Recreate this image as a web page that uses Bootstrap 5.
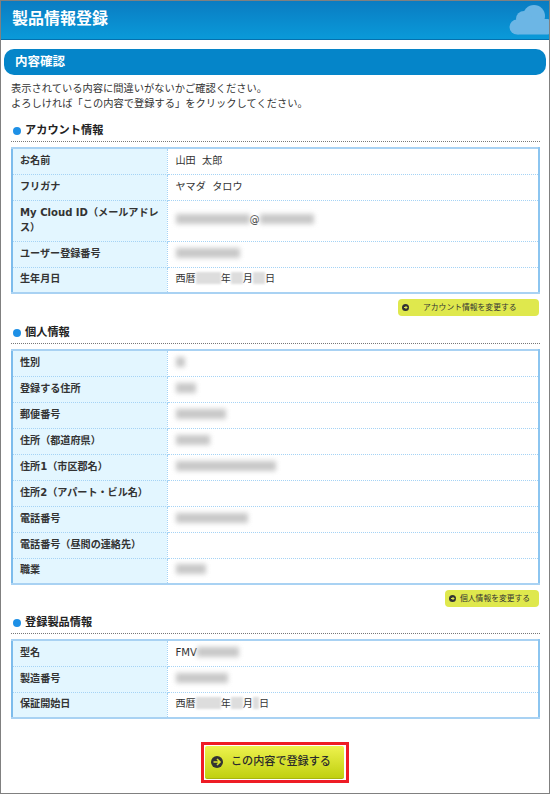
<!DOCTYPE html>
<html lang="ja"><head><meta charset="utf-8">
<link href="https://cdn.jsdelivr.net/npm/bootstrap@5.3.0/dist/css/bootstrap.min.css" rel="stylesheet">
<style>
html,body{height:100%;margin:0;overflow:hidden}
body{font-family:"DejaVu Sans","Noto Sans CJK JP",sans-serif;font-size:10.25px;color:#333;background:#fff}
.frame{height:794px;border:1px solid #808080;position:relative;overflow:hidden}
.topbar{height:39px;background:linear-gradient(#0a7cc2,#0a9ad9);border-bottom:1px solid #0670ad;padding-left:11px;position:relative}
.topbar h1{font-size:16px;font-weight:700;color:#fff;margin:0;line-height:36px}
.cloud{position:absolute;right:0;top:4px}
.sect-bar{margin:9px 3px 0;height:26px;background:#0585c9;border-radius:10px;color:#fff;font-size:12.5px;font-weight:700;line-height:25px;padding-left:11px}
.lead-text{margin:6px 0 0 10px;line-height:15px;font-size:10.25px;color:#333}
.sub-h{margin:10px 9px 0 10px;height:21px;border-bottom:1px dotted #777;font-size:11.2px;font-weight:700;color:#222;line-height:15px;display:flex;align-items:flex-start;gap:4px;padding:2px 0 0 2px}
.sub-h i{width:8px;height:8px;border-radius:50%;background:#1e90e6;margin-top:4px;flex:none}
.info-t{margin:5px 9px 0 10px;width:529px;table-layout:fixed;border-collapse:collapse;border:2px solid #a9d2f3;border-left-color:#7dbcec;border-right-color:#8cc5f0}
.info-t th,.info-t td{height:26px;border-bottom:1px dotted #a5d3f5;padding:0 7px 2px;vertical-align:middle;font-size:10.1px;line-height:15px;color:#333}
.info-t td{padding-left:8px}
.info-t th{width:155px;background:#e3f6ff;font-weight:700;border-right:1px dotted #a5d3f5}
.info-t tr:last-child th,.info-t tr:last-child td{border-bottom:0}
.blur-x{display:inline-block;height:10px;background:#c8c8c8;filter:blur(2.4px);vertical-align:-1px}
.pale-x{display:inline-block;height:12px;background:#ddd;filter:blur(.8px);vertical-align:-2px}
.btn-row{display:flex;justify-content:flex-end;margin:5px 10px 0 0}
.lime-btn{height:17px;background:#dfe84d;border-radius:4px;font-size:7.8px;line-height:17px;color:#333;padding:0;display:flex;align-items:center;text-decoration:none;white-space:nowrap}
.lime-btn svg{margin-left:4px;flex:none}
.go-1{width:141px}.go-1 span{margin-left:14px}
.go-2{width:94px}.go-2 span{margin-left:4px}
.main-wrap{display:flex;justify-content:center;margin:23px 0 0 0}
.main-box{border:3px solid #ee1c25;padding:1px;width:148px;height:41px;display:block}
.main-btn{display:flex;align-items:center;height:33px;width:139px;background:linear-gradient(#eef24e,#c0d010);border-radius:2px;border-bottom:1px solid #a8b50f;color:#2b2b2b;font-size:11.1px;font-weight:500;text-decoration:none;padding-left:6px;gap:8px;white-space:nowrap}
</style></head><body>
<div class="frame">
<div class="topbar"><h1>製品情報登録</h1>
<svg class="cloud" width="40" height="30" viewBox="0 0 40 30"><g fill="#6cb6e5"><circle cx="25" cy="11" r="11"/><circle cx="15" cy="14" r="8"/><circle cx="8" cy="22" r="7.500"/><rect x="8" y="14" width="32" height="15.500" rx="1"/></g></svg>
</div>
<div class="sect-bar">内容確認</div>
<p class="lead-text">表示されている内容に間違いがないかご確認ください。<br>よろしければ「この内容で登録する」をクリックしてください。</p>

<div class="sub-h"><i></i>アカウント情報</div>
<table class="info-t">
<tr><th>お名前</th><td>山田&nbsp;&nbsp;太郎</td></tr>
<tr><th>フリガナ</th><td>ヤマダ&nbsp;&nbsp;タロウ</td></tr>
<tr><th style="height:41px">My Cloud ID（メールアドレス）</th><td><span class="blur-x" style="width:74px"></span>@<span class="blur-x" style="width:54px"></span></td></tr>
<tr><th>ユーザー登録番号</th><td><span class="blur-x" style="width:64px"></span></td></tr>
<tr><th>生年月日</th><td>西暦<span class="pale-x" style="width:25px"></span>年<span class="pale-x" style="width:12px"></span>月<span class="pale-x" style="width:12px"></span>日</td></tr>
</table>
<div class="btn-row"><a class="lime-btn go-1" href="#"><svg width="7" height="7" viewBox="0 0 7 7"><circle cx="3.500" cy="3.500" r="3.500" fill="#333"/><path d="M2 3.500h3M3.500 2l1.500 1.500L3.500 5" stroke="#dfe84d" fill="none"/></svg><span>アカウント情報を変更する</span></a></div>

<div class="sub-h" style="margin-top:7px"><i></i>個人情報</div>
<table class="info-t">
<tr><th>性別</th><td><span class="blur-x" style="width:9px"></span></td></tr>
<tr><th>登録する住所</th><td><span class="blur-x" style="width:20px"></span></td></tr>
<tr><th>郵便番号</th><td><span class="blur-x" style="width:50px"></span></td></tr>
<tr><th>住所（都道府県）</th><td><span class="blur-x" style="width:34px"></span></td></tr>
<tr><th>住所1（市区郡名）</th><td><span class="blur-x" style="width:100px"></span></td></tr>
<tr><th>住所2（アパート・ビル名）</th><td></td></tr>
<tr><th>電話番号</th><td><span class="blur-x" style="width:72px"></span></td></tr>
<tr><th>電話番号（昼間の連絡先）</th><td></td></tr>
<tr><th>職業</th><td><span class="blur-x" style="width:30px"></span></td></tr>
</table>
<div class="btn-row"><a class="lime-btn go-2" href="#"><svg width="7" height="7" viewBox="0 0 7 7"><circle cx="3.500" cy="3.500" r="3.500" fill="#333"/><path d="M2 3.500h3M3.500 2l1.500 1.500L3.500 5" stroke="#dfe84d" fill="none"/></svg><span>個人情報を変更する</span></a></div>

<div class="sub-h" style="margin-top:6px"><i></i>登録製品情報</div>
<table class="info-t">
<tr><th>型名</th><td>FMV<span class="blur-x" style="width:42px"></span></td></tr>
<tr><th>製造番号</th><td><span class="blur-x" style="width:52px"></span></td></tr>
<tr><th>保証開始日</th><td>西暦<span class="pale-x" style="width:25px"></span>年<span class="pale-x" style="width:12px"></span>月<span class="pale-x" style="width:6px"></span>日</td></tr>
</table>
<div class="main-wrap"><div class="main-box"><a class="main-btn" href="#"><svg width="12" height="12" viewBox="0 0 12 12"><circle cx="6" cy="6" r="6" fill="#333"/><path d="M2.500 6h6M6 3l3 3-3 3" stroke="#d9e22f" stroke-width="1.600" fill="none"/></svg>この内容で登録する</a></div></div>
</div>
<script src="https://cdn.jsdelivr.net/npm/bootstrap@5.3.0/dist/js/bootstrap.bundle.min.js"></script>
</body></html>
